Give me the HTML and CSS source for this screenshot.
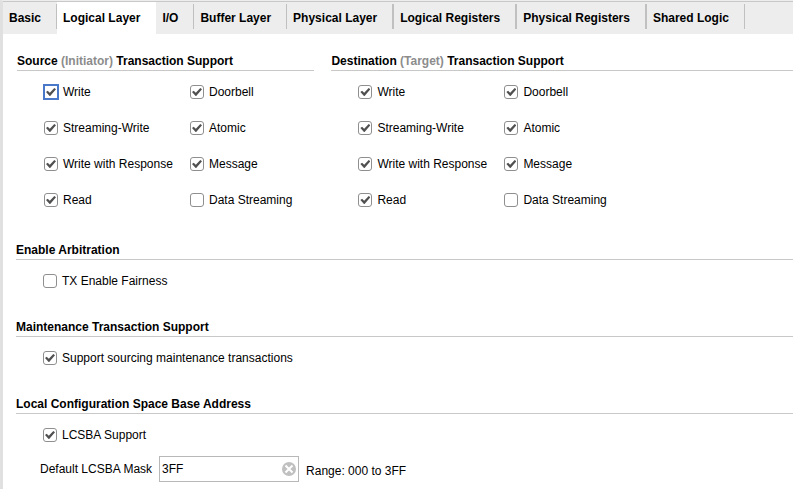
FILE: index.html
```html
<!DOCTYPE html>
<html lang="en">
<head>
  <meta charset="UTF-8">
  <meta name="viewport" content="width=device-width, initial-scale=1.0">
  <title>Logical Layer</title>
  <link rel="stylesheet" href="styles.css">
</head>
<body>

  <!-- Tabs -->
  <div class="tabs" role="tablist">
    <button class="tab" role="tab">Basic</button>
    <button class="tab active" role="tab" aria-selected="true">Logical Layer</button>
    <button class="tab" role="tab">I/O</button>
    <button class="tab" role="tab">Buffer Layer</button>
    <button class="tab wide" role="tab">Physical Layer</button>
    <button class="tab wide" role="tab">Logical Registers</button>
    <button class="tab wide" role="tab">Physical Registers</button>
    <button class="tab" role="tab">Shared Logic</button>
  </div>

  <main class="panel">
    <!-- Source / destination transactions -->
    <div class="transactions">
      <section class="group">
        <h2 class="heading">Source <span class="hint">(Initiator)</span> Transaction Support</h2>
        <div class="options">
          <label class="option"><input type="checkbox" class="check focused" checked>Write</label>
          <label class="option"><input type="checkbox" class="check" checked>Doorbell</label>
          <label class="option"><input type="checkbox" class="check" checked>Streaming-Write</label>
          <label class="option"><input type="checkbox" class="check" checked>Atomic</label>
          <label class="option"><input type="checkbox" class="check" checked>Write with Response</label>
          <label class="option"><input type="checkbox" class="check" checked>Message</label>
          <label class="option"><input type="checkbox" class="check" checked>Read</label>
          <label class="option"><input type="checkbox" class="check">Data Streaming</label>
        </div>
      </section>

      <section class="group">
        <h2 class="heading">Destination <span class="hint">(Target)</span> Transaction Support</h2>
        <div class="options">
          <label class="option"><input type="checkbox" class="check" checked>Write</label>
          <label class="option"><input type="checkbox" class="check" checked>Doorbell</label>
          <label class="option"><input type="checkbox" class="check" checked>Streaming-Write</label>
          <label class="option"><input type="checkbox" class="check" checked>Atomic</label>
          <label class="option"><input type="checkbox" class="check" checked>Write with Response</label>
          <label class="option"><input type="checkbox" class="check" checked>Message</label>
          <label class="option"><input type="checkbox" class="check" checked>Read</label>
          <label class="option"><input type="checkbox" class="check">Data Streaming</label>
        </div>
      </section>
    </div>

    <section class="section">
      <h2 class="heading">Enable Arbitration</h2>
      <label class="option"><input type="checkbox" class="check">TX Enable Fairness</label>
    </section>

    <section class="section">
      <h2 class="heading">Maintenance Transaction Support</h2>
      <label class="option"><input type="checkbox" class="check" checked>Support sourcing maintenance transactions</label>
    </section>

    <section class="section">
      <h2 class="heading">Local Configuration Space Base Address</h2>
      <label class="option"><input type="checkbox" class="check" checked>LCSBA Support</label>
      <div class="field">
        <label for="mask">Default LCSBA Mask</label>
        <div class="input-box">
          <input type="text" id="mask" class="input" value="3FF">
          <button class="clear" id="clearMask" aria-label="Clear">
            <svg width="14" height="14" viewBox="0 0 14 14">
              <circle cx="7" cy="7" r="7" fill="#c0c0c0"/>
              <path d="M3.5 3.5l7 7M10.5 3.5l-7 7" stroke="#fff" stroke-width="2"/>
            </svg>
          </button>
        </div>
        <span class="range">Range: 000 to 3FF</span>
      </div>
    </section>
  </main>

  <script>
    const mask = document.getElementById('mask');

    document.getElementById('clearMask').addEventListener('click', () => {
      mask.value = '';
      mask.focus();
    });
  </script>

</body>
</html>
```
FILE: styles.css
```css
* {
  box-sizing: border-box;
}

body {
  margin: 0;
  min-height: 100vh;
  border-top: 1px solid #ededed;
  border-left: 3px solid #e0e0e0;
  background-color: #fff;
  font-family: "Liberation Sans", Arial, sans-serif;
  font-size: 12px;
  line-height: 16px;
  color: #000;
}

button, input {
  font: inherit;
  color: inherit;
}

/* Tabs */
.tabs {
  display: flex;
  height: 33px;
  border-top: 1px solid #c8c8c8;
  background-color: #ededed;
}

.tab {
  display: flex;
  padding: 2px 0 5px 6px;
  border: 0;
  background: none;
  font-weight: bold;
  line-height: 28px;
  white-space: nowrap;
}

.tab::after {
  content: "";
  width: 1px;
  height: 25px;
  margin-left: 15px;
  background-color: #c0c0c0;
}

.tab.wide::after {
  width: 2px;
}

.tab.active {
  background-color: #fff;
}

.tab.active::after {
  background: none;
}

/* Panel */
.panel {
  padding: 19px 0 6px 13px;
}

.transactions {
  display: grid;
  grid-template-columns: auto 1fr;
  gap: 17px;
  padding-left: 1px;
}

.heading {
  margin: 0;
  padding-bottom: 1px;
  border-bottom: 1px solid #c8c8c8;
  font-size: 12px;
  font-weight: bold;
}

.hint {
  color: #8c8c8c;
}

.options {
  display: grid;
  grid-template-columns: 146px auto;
  justify-content: start;
  row-gap: 20px;
  padding: 13px 22px 0 0;
}

.option {
  display: flex;
  align-items: center;
  gap: 5px;
  padding-left: 27px;
  white-space: nowrap;
}

.check {
  appearance: none;
  display: grid;
  place-content: center;
  flex-shrink: 0;
  width: 14px;
  height: 14px;
  margin: 0;
  border: 1px solid #8f8f8f;
  border-radius: 3px;
  background-color: #fff;
}

.check:checked::before {
  content: "";
  width: 10px;
  height: 8px;
  background-color: #505050;
  clip-path: polygon(0 50%, 17% 33%, 38% 60%, 83% 0, 100% 17%, 42% 100%, 36% 100%);
}

.check.focused {
  border-color: #4a78c8;
  border-radius: 0;
  box-shadow: 0 0 0 1px #4a78c8;
}

.section {
  margin-top: 34px;
}

.section .option {
  margin-top: 13px;
}

.section + .section {
  margin-top: 30px;
}

/* Mask field */
.field {
  display: flex;
  align-items: center;
  margin-top: 13px;
  padding-left: 24px;
}

.input-box {
  display: flex;
  align-items: center;
  width: 140px;
  height: 26px;
  margin: 0 7px;
  padding: 0 2px;
  border: 1px solid #b8b8b8;
}

.input {
  flex: 1;
  min-width: 0;
  padding: 0;
  border: 0;
  outline: 0;
  background: none;
}

.clear {
  display: flex;
  padding: 0;
  border: 0;
  background: none;
}

.range {
  padding-top: 3px;
}
```
